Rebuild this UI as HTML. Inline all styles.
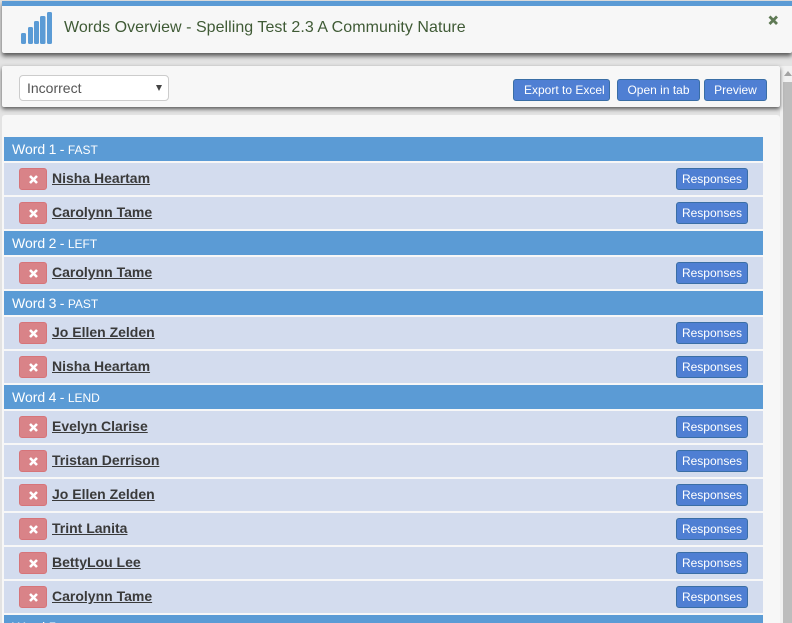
<!DOCTYPE html>
<html>
<head>
<meta charset="utf-8">
<style>
html,body{margin:0;padding:0;width:792px;height:623px;overflow:hidden;background:#e3e3e3;font-family:"Liberation Sans",sans-serif;}
#wrap{position:relative;width:792px;height:623px;overflow:hidden;background:#e3e3e3;}
.abs{position:absolute;}
#head{left:2px;top:1px;width:790px;height:52px;background:#f7f7f7;border-top:5px solid #5b9bd5;box-sizing:border-box;box-shadow:0 3px 5px #555;border-radius:0 0 2px 2px;}
#title{left:64px;top:18px;font-size:16px;line-height:20px;color:#3f5a35;white-space:nowrap;letter-spacing:.04px;}
#close{left:767px;top:14px;}
#bar{left:2px;top:66px;width:778px;height:41px;background:#f7f7f7;box-shadow:0 2px 4px #555;border-radius:2px;}
#sel{left:19px;top:75px;width:150px;height:26px;box-sizing:border-box;background:#fff;border:1px solid #ccc;border-radius:4px;font-size:14px;line-height:24px;color:#555;padding-left:7px;}
#arrow{left:156px;top:85px;width:0;height:0;border-left:3.5px solid transparent;border-right:3.5px solid transparent;border-top:6px solid #444;}
.btn{position:absolute;box-sizing:border-box;height:22px;background:#4f7fd3;border:1px solid #3a6ea5;border-radius:3px;color:#fff;font-size:12px;line-height:20px;text-align:center;white-space:nowrap;}
#panel{left:2px;top:115px;width:778px;height:508px;background:#f7f7f7;border-radius:3px 3px 0 0;}
#sbt{left:780px;top:66px;width:12px;height:557px;background:#f1f1f1;}
#sb{left:783px;top:82px;width:9px;height:541px;background:#bdbdbd;}
#sba{left:784px;top:71px;width:0;height:0;border-left:4px solid transparent;border-right:4px solid transparent;border-bottom:5px solid #a3a3a3;}
.wh{position:absolute;left:4px;width:759px;height:24px;background:#5b9bd5;color:#fff;font-size:14px;line-height:24px;padding-left:8px;box-sizing:border-box;white-space:nowrap;word-spacing:-.5px;}
.wh small{font-size:12px;}
.r{position:absolute;left:4px;width:759px;height:32px;background:#d3dcee;}
.x{position:absolute;left:15px;top:5px;width:28px;height:22px;background:#d98388;border:1px solid #d67479;border-radius:3px;box-sizing:border-box;}
.x svg{position:absolute;left:7.5px;top:4.5px;}
.n{position:absolute;left:48px;top:6px;font-size:14px;line-height:18px;font-weight:bold;color:#3a3a3a;text-decoration:underline;white-space:nowrap;}
.r .btn{left:672px;top:5px;width:72px;}
</style>
</head>
<body>
<div id="wrap">
<div class="abs" id="sbt"></div>
<div class="abs" id="sb"></div>
<div class="abs" id="sba"></div>
<div class="abs" id="head"></div>
<svg class="abs" style="left:20px;top:10px" width="33" height="36" viewBox="0 0 33 36">
<g fill="#5b9bd5">
<rect x="1" y="23" width="5" height="11" rx="1.5"/>
<rect x="8" y="17" width="5" height="17" rx="1.5"/>
<rect x="14" y="11" width="5" height="23" rx="1.5"/>
<rect x="20" y="6" width="5.5" height="28" rx="1.5"/>
<rect x="27" y="2" width="5" height="32" rx="1.5"/>
</g>
</svg>
<div class="abs" id="title">Words Overview - Spelling Test 2.3 A Community Nature</div>
<svg class="abs" id="close" width="13" height="13" viewBox="0 0 13 13"><path d="M2.5 2.5L10 10M10 2.5L2.5 10" stroke="#5f7a55" stroke-width="2.8" fill="none"/></svg>
<div class="abs" id="bar"></div>
<div class="abs" id="sel">Incorrect</div>
<div class="abs" id="arrow"></div>
<div class="btn" style="left:513px;top:79px;width:97px;padding-left:10px;text-align:left;">Export to Excel</div>
<div class="btn" style="left:617px;top:79px;width:83px;">Open in tab</div>
<div class="btn" style="left:704px;top:79px;width:63px;">Preview</div>
<div class="abs" id="panel"></div>

<div class="wh" style="top:137px">Word 1 - <small>FAST</small></div>
<div class="r" style="top:163px"><div class="x"><svg width="11" height="11" viewBox="0 0 11 11"><path d="M2 2L9 9M9 2L2 9" stroke="#fff" stroke-width="2.6"/></svg></div><div class="n">Nisha Heartam</div><div class="btn">Responses</div></div>
<div class="r" style="top:197px"><div class="x"><svg width="11" height="11" viewBox="0 0 11 11"><path d="M2 2L9 9M9 2L2 9" stroke="#fff" stroke-width="2.6"/></svg></div><div class="n">Carolynn Tame</div><div class="btn">Responses</div></div>

<div class="wh" style="top:231px">Word 2 - <small>LEFT</small></div>
<div class="r" style="top:257px"><div class="x"><svg width="11" height="11" viewBox="0 0 11 11"><path d="M2 2L9 9M9 2L2 9" stroke="#fff" stroke-width="2.6"/></svg></div><div class="n">Carolynn Tame</div><div class="btn">Responses</div></div>

<div class="wh" style="top:291px">Word 3 - <small>PAST</small></div>
<div class="r" style="top:317px"><div class="x"><svg width="11" height="11" viewBox="0 0 11 11"><path d="M2 2L9 9M9 2L2 9" stroke="#fff" stroke-width="2.6"/></svg></div><div class="n">Jo Ellen Zelden</div><div class="btn">Responses</div></div>
<div class="r" style="top:351px"><div class="x"><svg width="11" height="11" viewBox="0 0 11 11"><path d="M2 2L9 9M9 2L2 9" stroke="#fff" stroke-width="2.6"/></svg></div><div class="n">Nisha Heartam</div><div class="btn">Responses</div></div>

<div class="wh" style="top:385px">Word 4 - <small>LEND</small></div>
<div class="r" style="top:411px"><div class="x"><svg width="11" height="11" viewBox="0 0 11 11"><path d="M2 2L9 9M9 2L2 9" stroke="#fff" stroke-width="2.6"/></svg></div><div class="n">Evelyn Clarise</div><div class="btn">Responses</div></div>
<div class="r" style="top:445px"><div class="x"><svg width="11" height="11" viewBox="0 0 11 11"><path d="M2 2L9 9M9 2L2 9" stroke="#fff" stroke-width="2.6"/></svg></div><div class="n">Tristan Derrison</div><div class="btn">Responses</div></div>
<div class="r" style="top:479px"><div class="x"><svg width="11" height="11" viewBox="0 0 11 11"><path d="M2 2L9 9M9 2L2 9" stroke="#fff" stroke-width="2.6"/></svg></div><div class="n">Jo Ellen Zelden</div><div class="btn">Responses</div></div>
<div class="r" style="top:513px"><div class="x"><svg width="11" height="11" viewBox="0 0 11 11"><path d="M2 2L9 9M9 2L2 9" stroke="#fff" stroke-width="2.6"/></svg></div><div class="n">Trint Lanita</div><div class="btn">Responses</div></div>
<div class="r" style="top:547px"><div class="x"><svg width="11" height="11" viewBox="0 0 11 11"><path d="M2 2L9 9M9 2L2 9" stroke="#fff" stroke-width="2.6"/></svg></div><div class="n">BettyLou Lee</div><div class="btn">Responses</div></div>
<div class="r" style="top:581px"><div class="x"><svg width="11" height="11" viewBox="0 0 11 11"><path d="M2 2L9 9M9 2L2 9" stroke="#fff" stroke-width="2.6"/></svg></div><div class="n">Carolynn Tame</div><div class="btn">Responses</div></div>

<div class="wh" style="top:615px">Word 5</div>
</div>
</body>
</html>
